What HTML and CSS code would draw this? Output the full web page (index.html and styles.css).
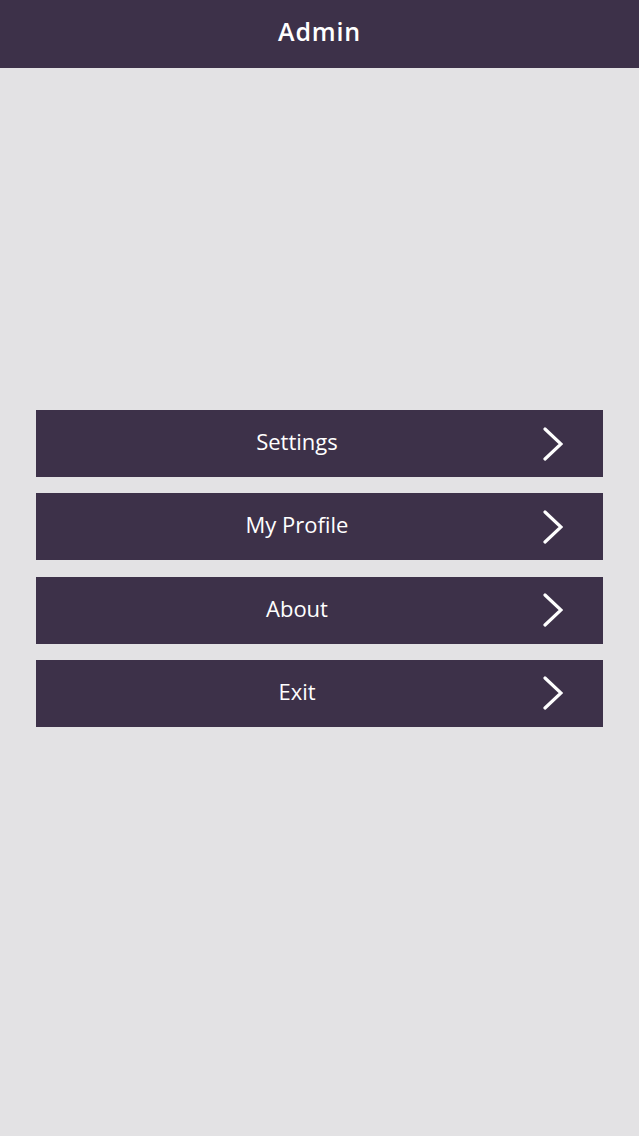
FILE: index.html
```html
<!DOCTYPE html>
<html lang="en">
<head>
    <meta charset="UTF-8">
    <meta name="viewport" content="width=device-width, initial-scale=1.0">
    <title>Admin</title>
    <link rel="stylesheet" href="styles.css">
</head>
<body>

<header class="top-bar">
    <h1>Admin</h1>
</header>

<main class="menu">
    <a class="menu-item" href="#">
        <span class="menu-label">Settings</span>
        <svg class="chevron" viewBox="0 0 20 34"><polyline points="2,2 18,17 2,32"/></svg>
    </a>
    <a class="menu-item" href="#">
        <span class="menu-label">My Profile</span>
        <svg class="chevron" viewBox="0 0 20 34"><polyline points="2,2 18,17 2,32"/></svg>
    </a>
    <a class="menu-item" href="#">
        <span class="menu-label">About</span>
        <svg class="chevron" viewBox="0 0 20 34"><polyline points="2,2 18,17 2,32"/></svg>
    </a>
    <a class="menu-item" href="#">
        <span class="menu-label">Exit</span>
        <svg class="chevron" viewBox="0 0 20 34"><polyline points="2,2 18,17 2,32"/></svg>
    </a>
</main>

</body>
</html>
```

FILE: styles.css
```css
body {
    margin: 0;
    font-family: "Open Sans", Arial, sans-serif;
    background-color: #e3e2e4;
    height: 100vh;
}
.top-bar {
    background-color: #3d3149;
    height: 68px;
    display: flex;
    justify-content: center;
    align-items: center;
}
.top-bar h1 {
    margin: 0 0 6px 0;
    color: #fff;
    font-size: 25px;
    font-weight: 600;
    letter-spacing: 0.8px;
}
.menu {
    display: flex;
    flex-direction: column;
    gap: 16.33px;
    padding: 342px 36px 0 36px;
}
.menu-item {
    display: flex;
    align-items: center;
    height: 67px;
    background-color: #3d3149;
    color: #fff;
    text-decoration: none;
}
.menu-label {
    flex: 1;
    text-align: center;
    font-size: 22px;
    padding-left: 15px;
    margin-bottom: 5px;
}
.chevron {
    width: 20px;
    height: 34px;
    margin-right: 40px;
    fill: none;
    stroke: #fff;
    stroke-width: 3.2;
    stroke-linecap: round;
    stroke-linejoin: miter;
}
```
